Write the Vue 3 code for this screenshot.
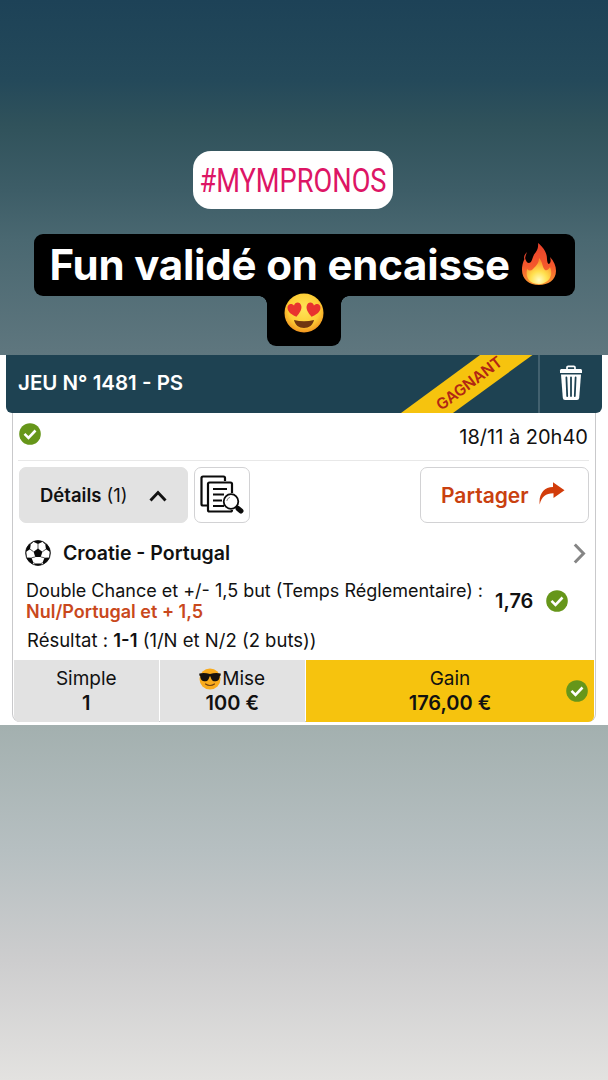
<script setup>
const stakes = [
  { id: 'simple', label: 'Simple', value: '1' },
  { id: 'mise', label: 'Mise', value: '100 €', cool: true },
  { id: 'gain', label: 'Gain', value: '176,00 €', won: true }
]
</script>

<template>
  <main class="story">
    <div class="hashtag"><span>#MYMPRONOS</span></div>

    <div class="caption">
      <div class="caption-line">
        <span class="caption-text">Fun validé on encaisse</span>
        <svg class="fire" viewBox="0 0 36 44">
          <defs>
            <linearGradient id="flame" x1="0" y1="0" x2="0" y2="1">
              <stop offset="0" stop-color="#e8402a" />
              <stop offset=".55" stop-color="#f4582c" />
              <stop offset="1" stop-color="#fb9a32" />
            </linearGradient>
            <radialGradient id="core" cx=".5" cy=".85" r=".75">
              <stop offset="0" stop-color="#fffbc0" />
              <stop offset=".45" stop-color="#ffe04e" />
              <stop offset="1" stop-color="#fb9029" />
            </radialGradient>
          </defs>
          <path fill="url(#flame)" d="M17 1C22 5 26 10 26 17C26 20 27 22 28 22C30 21 30 18 29 15C33 19 35 24 35 29C35 38 27 43 18 43C8 43 1 37 1 28C1 22 3 18 4 16C5 19 6 21 8 21C10 21 11 18 12 15C13 11 18 9 17 1Z" />
          <path fill="#d9432b" d="M6 10C3 13 2 16 4 18C4 15 5 13 6 10Z" />
          <path fill="url(#core)" d="M18 16C22 20 21 25 24 28C26 29 28 27 29 25C33 34 27 42 18 42C9 42 4 36 6 27C8 29 10 29 12 27C15 24 18 21 18 16Z" />
        </svg>
      </div>
      <div class="caption-tail">
        <svg class="love" viewBox="0 0 40 40">
          <defs>
            <radialGradient id="face" cx=".5" cy=".4" r=".62">
              <stop offset="0" stop-color="#ffe458" />
              <stop offset=".65" stop-color="#fdcd35" />
              <stop offset="1" stop-color="#f08e1d" />
            </radialGradient>
          </defs>
          <circle cx="20" cy="20" r="19.5" fill="url(#face)" />
          <path fill="#6f3510" d="M10 27Q20 29.500 30 27C29 32 25 35 20 35C15 35 11 32 10 27Z" />
          <path fill="#e8332f" transform="rotate(-12 11 17)" d="M11 24C7 21 4 18 4 14.500C4 9.500 9.500 9 11 12.500C12.500 9 18 9.500 18 14.500C18 18 15 21 11 24Z" />
          <path fill="#e8332f" transform="rotate(12 29 17)" d="M29 24C25 21 22 18 22 14.500C22 9.500 27.500 9 29 12.500C30.500 9 36 9.500 36 14.500C36 18 33 21 29 24Z" />
        </svg>
      </div>
    </div>

    <section class="ticket">
      <header class="bar">
        <h1>JEU N° 1481 - PS</h1>
        <svg class="ribbon" viewBox="0 0 132 58">
          <polygon points="79,0 131.500,0 52,58 0,58" fill="#f6c30e" />
          <text transform="translate(71.500 32.500) rotate(-37)" text-anchor="middle" textLength="78">GAGNANT</text>
        </svg>
        <div class="trash">
          <svg viewBox="0 0 24 36">
            <path d="M8 5V2.500Q8 1.300 9.200 1.300H14.800Q16 1.300 16 2.500V5" fill="none" stroke="#fff" stroke-width="1.700" />
            <path fill="#fff" d="M2.300 4H21.700Q23 4 23 5.500V8H1V5.500Q1 4 2.300 4Z" />
            <path fill="#fff" d="M2 9.500H22L20.200 33Q20 35 18 35H6Q4 35 3.800 33Z" />
            <path d="M7.400 12.500L8.200 31M12 12.500V31M16.600 12.500L15.800 31" stroke="#1e4252" stroke-width="1.800" stroke-linecap="round" />
          </svg>
        </div>
      </header>

      <div class="card">
        <div class="status">
          <svg class="check" viewBox="0 0 22 22"><circle cx="11" cy="11" r="10.800" fill="#66961a" /><path d="M5.500 10.800L9.500 14.800L16.500 7.500" /></svg>
          <time>18/11 à 20h40</time>
        </div>

        <div class="actions">
          <button class="details">
            <span><b>Détails</b> (1)</span>
            <svg viewBox="0 0 18 12"><path d="M1.500 10.500L9 2.500L16.500 10.500" fill="none" stroke="#111" stroke-width="2.900" /></svg>
          </button>
          <button class="inspect">
            <svg viewBox="0 0 44 40" fill="none" stroke="#0b0b0b" stroke-width="2.200" stroke-linejoin="round">
              <path d="M7 30.500H3Q1.500 30.500 1.500 29V3Q1.500 1.500 3 1.500H23.500Q25 1.500 25 3V6" />
              <path d="M32 18V9Q32 7.500 30.500 7.500H9.500Q8 7.500 8 9V35Q8 36.500 9.500 36.500H30.500Q32 36.500 32 35" />
              <path d="M13 14H27M13 19.500H24M13 25.500H22M13 31H24" stroke-width="1.900" />
              <circle cx="31" cy="26.500" r="7.300" fill="#fff" stroke-width="1.800" />
              <path d="M26.800 26A4.500 4.500 0 0 1 30 22.300" stroke-width="1" stroke="#888" />
              <path d="M36 32L38 34" stroke-width="1.800" />
              <path d="M38 33.500L41 36" stroke-width="5" stroke-linecap="round" />
            </svg>
          </button>
          <button class="share">
            <span>Partager</span>
            <svg viewBox="0 0 26 23"><path fill="#d23c0a" d="M.7 22.500C-.5 12 5 5 14 5V.3L25.500 8.300L14.500 16V11.300C7 11.200 2.500 14.500 .7 22.500Z" /></svg>
          </button>
        </div>

        <div class="match">
          <svg class="ball" viewBox="0 0 26 26">
            <defs><clipPath id="ballClip"><circle cx="13" cy="13" r="12.400" /></clipPath></defs>
            <circle cx="13" cy="13" r="12.400" fill="#fff" stroke="#111" stroke-width=".9" />
            <g clip-path="url(#ballClip)" fill="#080808">
              <path d="M13 8.500L17.400 11.700L15.700 16.900H10.300L8.600 11.700Z" />
              <path d="M8.300 1.800L13 4L17.700 1.800L17 0H9Z" />
              <path d="M20.200 4.200L21 9.200L25.200 12L27 9L24 3Z" />
              <path d="M5.800 4.200L5 9.200L.8 12L-1 9L2 3Z" />
              <path d="M24.500 17.500L19.500 17.800L17.500 22.800L20 26L26 22Z" />
              <path d="M1.500 17.500L6.500 17.800L8.500 22.800L6 26L0 22Z" />
              <path d="M10 23.500H16L17 26H9Z" />
              <path fill="none" stroke="#222" stroke-width=".75" d="M13 4V9M17.400 11.700L21 9.200M15.700 16.900L19.500 17.800M10.300 16.900L6.500 17.800M8.600 11.700L5 9.200M8.500 22.800L10 23.500M17.500 22.800L16 23.500M8.300 1.800L5.800 4.200M17.700 1.800L20.200 4.200M.8 12L1.500 17.500M25.200 12L24.500 17.500" />
            </g>
          </svg>
          <h2>Croatie - Portugal</h2>
          <svg class="next" viewBox="0 0 13 21"><path d="M1.800 1.500L10.500 10.500L1.800 19.500" fill="none" stroke="#858585" stroke-width="3" /></svg>
        </div>

        <div class="bet">
          <p class="market"><span class="market-name">Double Chance et +/- 1,5 but (Temps Réglementaire) :</span><strong class="pick">Nul/Portugal et + 1,5</strong></p>
          <strong class="odds">1,76</strong>
          <svg class="check" viewBox="0 0 22 22"><circle cx="11" cy="11" r="10.800" fill="#66961a" /><path d="M5.500 10.800L9.500 14.800L16.500 7.500" /></svg>
        </div>
        <p class="result"><span>Résultat : <b>1-1</b> (1/N et N/2 (2 buts))</span></p>

        <footer class="stakes">
          <div v-for="s in stakes" :key="s.id" class="stake" :class="s.id">
            <span class="label">
              <svg v-if="s.cool" class="cool" viewBox="0 0 22 22">
                <circle cx="11" cy="11" r="10.500" fill="#f9ab1c" />
                <path fill="#17120d" d="M.3 5.500Q5.500 4.300 11 6Q16.500 4.300 21.700 5.500V7.500L20.800 8C20.500 12 18.500 13.300 16 13.300C13 13.300 12 11 11.600 8.500H10.400C10 11 9 13.300 6 13.300C3.500 13.300 1.500 12 1.200 8L.3 7.500Z" />
                <path d="M6.500 16Q11 19 15.500 16" fill="none" stroke="#70400f" stroke-width="1.200" stroke-linecap="round" />
              </svg>
              <span class="label-text">{{ s.label }}</span>
            </span>
            <strong>{{ s.value }}</strong>
            <svg v-if="s.won" class="check won" viewBox="0 0 22 22"><circle cx="11" cy="11" r="10.800" fill="#66961a" /><path d="M5.500 10.800L9.500 14.800L16.500 7.500" /></svg>
          </div>
        </footer>
      </div>
    </section>
  </main>
</template>

<style>
body { margin: 0; }
</style>

<style scoped>
* { box-sizing: border-box; }
h1, h2, p { margin: 0; }
svg { display: block; flex: none; }
.story {
  width: 608px;
  height: 1080px;
  padding-top: 151px;
  overflow: hidden;
  display: flex;
  flex-direction: column;
  align-items: center;
  font-family: Inter, "Liberation Sans", sans-serif;
  color: #111;
  white-space: nowrap;
  background: linear-gradient(180deg, #1d4257 0, #24495a 80px, #30525b 125px, #3d5d67 190px, #4a6871 240px, #5e767e 350px, #a3b0af 725px, #b6bfc1 850px, #cdcdce 960px, #e3e2e0 1080px);
}
.hashtag {
  width: 200px;
  height: 58px;
  margin-left: -22px;
  border-radius: 18px;
  background: #fff;
  display: flex;
  align-items: center;
  justify-content: center;
  color: #dd1565;
  font: 400 34px/58px Roboto, sans-serif;
}
.hashtag span { transform: scaleX(.8); }
.caption {
  margin-top: 25px;
  display: flex;
  flex-direction: column;
  align-items: center;
}
.caption-line {
  width: 541px;
  height: 62px;
  padding: 0 18px 0 16px;
  border-radius: 9px;
  background: #000;
  display: flex;
  align-items: center;
  justify-content: space-between;
}
.caption-text {
  color: #fff;
  font-size: 42px;
  line-height: 60px;
  font-weight: 700;
  letter-spacing: -.2px;
}
.fire { width: 36px; height: 44px; margin-top: -3px; }
.caption-tail {
  position: relative;
  width: 74px;
  height: 50px;
  padding-top: 0;
  border-radius: 0 0 9px 9px;
  background: #000;
  display: flex;
  justify-content: center;
}
.caption-tail::before, .caption-tail::after {
  content: "";
  position: absolute;
  top: 0;
  width: 8px;
  height: 8px;
}
.caption-tail::before { left: -8px; background: radial-gradient(circle at 0 100%, transparent 7.500px, #000 8px); }
.caption-tail::after { right: -8px; background: radial-gradient(circle at 100% 100%, transparent 7.500px, #000 8px); }
.love { width: 40px; height: 40px; margin-top: -3px; }
.ticket {
  width: 608px;
  height: 370px;
  margin-top: 9px;
  padding: 0 6px;
  background: #fff;
}
.bar {
  height: 58px;
  border-radius: 0 0 6px 6px;
  background: #1e4252;
  display: flex;
  align-items: center;
  overflow: hidden;
}
.bar h1 {
  flex: 1;
  padding-left: 12px;
  color: #fff;
  font-size: 20.500px;
  line-height: 26px;
  font-weight: 600;
  margin-top: -3px;
}
.ribbon { width: 132px; height: 58px; margin-right: 5px; }
.ribbon text { font: 600 15.500px Inter, sans-serif; fill: #b12614; }
.trash {
  width: 64px;
  height: 58px;
  border-left: 2px solid #42616f;
  display: flex;
  align-items: center;
  justify-content: center;
}
.trash svg { width: 24px; height: 36px; margin-top: -3px; }
.card {
  height: 309px;
  margin: 0 6px;
  border: 1.500px solid #c9c9cb;
  border-top: 0;
  border-radius: 0 0 8px 8px;
  padding: 0 1px 1px;
}
.status {
  height: 48px;
  margin: 0 5px 0 4px;
  border-bottom: 1px solid #e8e8e8;
  display: flex;
  justify-content: space-between;
  padding: 10px 1px 0;
}
.check { width: 22px; height: 22px; }
.check path { fill: none; stroke: #fff; stroke-width: 2.600; }
time { font-size: 20px; line-height: 28px; }
.actions {
  display: flex;
  margin: 6px 5px 0;
  gap: 6px;
}
button {
  height: 56px;
  padding: 0;
  border: 1.500px solid #d2d2d4;
  border-radius: 7px;
  background: #fff;
  font-family: inherit;
  color: inherit;
  display: flex;
  align-items: center;
}
.details { width: 169px; background: #e2e2e2; border-color: #e2e2e2; padding-left: 20px; font-size: 18.500px; }
.details b { font-weight: 600; }
.details svg { width: 18px; height: 12px; margin-left: 21px; margin-top: 2px; }
.inspect { width: 56px; justify-content: center; }
.inspect svg { width: 44px; height: 40px; }
.share { width: 169px; margin-left: auto; padding-left: 20px; color: #c9400f; font-size: 21px; font-weight: 600; gap: 10px; }
.share svg { width: 26px; height: 23px; margin-top: -3px; }
.match {
  display: flex;
  align-items: center;
  height: 28px;
  margin: 16px 8px 0 11px;
}
.ball { width: 26px; height: 26px; }
.match h2 { margin-left: 12px; font-size: 19.500px; line-height: 26px; font-weight: 600; flex: 1; }
.next { width: 13px; height: 21px; }
.bet {
  height: 46px;
  margin: 11px 26px 0 12px;
  display: flex;
  align-items: center;
}
.market { width: 469px; display: flex; flex-direction: column; font-size: 18px; line-height: 21px; }
.pick { color: #c9481c; font-weight: 600; }
.odds { font-size: 20px; font-weight: 600; flex: 1; }
.result { margin: 4px 0 0 13px; height: 32px; font-size: 18.500px; line-height: 24px; }
.result b { font-weight: 600; }
.stakes {
  height: 62px;
  display: grid;
  grid-template-columns: 144.500px 144.500px 1fr;
  gap: 1.500px;
  border-radius: 0 0 6px 6px;
  overflow: hidden;
}
.stake {
  position: relative;
  display: flex;
  flex-direction: column;
  align-items: center;
  padding-top: 6px;
  background: #e2e2e2;
  font-size: 19px;
  line-height: 25px;
}
.stake.gain { background: #f6c30e; }
.stake strong { font-size: 20px; font-weight: 600; line-height: 25px; }
.label { display: flex; align-items: center; gap: 1px; }
.cool { width: 22px; height: 22px; }
.won { position: absolute; right: 6px; top: 20px; }
</style>
